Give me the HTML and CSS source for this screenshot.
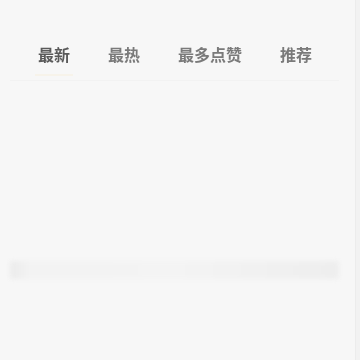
FILE: index.html
```html
<!DOCTYPE html>
<html lang="zh">
<head>
<meta charset="utf-8">
<link rel="stylesheet" href="styles.css">
</head>
<body>
<div class="page">
  <div class="main">
    <nav class="tabs">
      <div class="tab active">最新</div>
      <div class="tab">最热</div>
      <div class="tab">最多点赞</div>
      <div class="tab">推荐</div>
    </nav>
    <div class="content">
      <div class="bar"></div>
    </div>
  </div>
  <div class="side"></div>
</div>
</body>
</html>
```

FILE: styles.css
```css
html, body {
  margin: 0;
  padding: 0;
  background: #f7f7f7;
}
.page {
  display: flex;
  width: 360px;
  height: 360px;
  overflow: hidden;
}
.main {
  width: 355px;
  flex-shrink: 0;
  display: flex;
  flex-direction: column;
}
.side {
  width: 5px;
  flex-shrink: 0;
  border-left: 1px solid #ececec;
  background: #f2f2f2;
  box-sizing: border-box;
}
.tabs {
  display: flex;
  margin: 43px 16px 0 10px;
  padding-left: 28px;
  height: 37px;
  border-bottom: 1px solid #f2f2f2;
}
.tab {
  flex-shrink: 0;
  white-space: nowrap;
  font-family: "Noto Sans CJK SC", sans-serif;
  font-size: 16px;
  line-height: 22px;
  color: #7a7a7a;
  margin-right: 38px;
  font-weight: 700;
  filter: blur(0.6px);
}
.tab.active {
  color: #5a5a5a;
  position: relative;
}
.tab.active::after {
  content: "";
  position: absolute;
  left: -3px;
  right: -3px;
  top: 31px;
  height: 2px;
  background: #f7f3ea;
}
.content {
  flex: 1;
  padding: 180px 16px 0 10px;
}
.bar {
  height: 18px;
  border-radius: 3px;
  background: linear-gradient(90deg, #ebebeb 0%, #f3f3f3 6%, #f4f4f4 50%, #f1f1f1 75%, #eeeeee 100%);
  filter: blur(2px);
}
```
